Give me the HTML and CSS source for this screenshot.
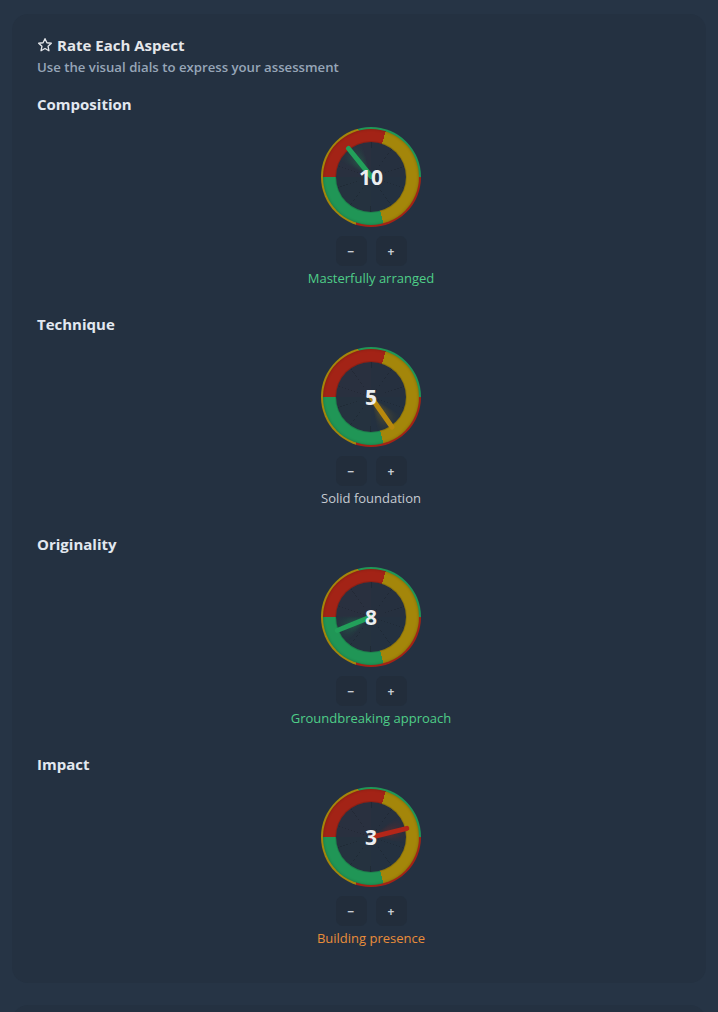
FILE: index.html
```html
<!DOCTYPE html>
<html lang="en">
<head>
<meta charset="utf-8">
<title>Rate Each Aspect</title>
<link rel="stylesheet" href="styles.css">
</head>
<body>
<div class="page">
  <section class="card">
    <header class="card-head">
      <h1 class="title">
        <svg class="star" viewBox="0 0 24 24" width="16" height="16" fill="none" stroke="currentColor" stroke-width="2" stroke-linejoin="round"><path d="M12 2.5l2.9 6.1 6.6.8-4.9 4.6 1.3 6.6L12 17.3l-5.9 3.3 1.3-6.6-4.9-4.6 6.6-.8z"/></svg>
        Rate Each Aspect
      </h1>
      <p class="subtitle">Use the visual dials to express your assessment</p>
    </header>

    <div class="aspect">
      <h2 class="aspect-name">Composition</h2>
      <div class="dial-wrap">
        <div class="dial">
          <div class="ring"></div>
          <div class="face"></div>
          <div class="glow" style="--a: 321deg; --c: rgba(34,160,90,0.35)"></div>
          <div class="needle green" style="transform: rotate(321deg)"></div>
          <div class="value">10</div>
        </div>
        <div class="controls">
          <button class="btn">−</button>
          <button class="btn">+</button>
        </div>
        <div class="verdict green-text">Masterfully arranged</div>
      </div>
    </div>

    <div class="aspect">
      <h2 class="aspect-name">Technique</h2>
      <div class="dial-wrap">
        <div class="dial">
          <div class="ring"></div>
          <div class="face"></div>
          <div class="glow" style="--a: 145deg; --c: rgba(184,140,10,0.35)"></div>
          <div class="needle yellow" style="transform: rotate(145deg)"></div>
          <div class="value">5</div>
        </div>
        <div class="controls">
          <button class="btn">−</button>
          <button class="btn">+</button>
        </div>
        <div class="verdict gray-text">Solid foundation</div>
      </div>
    </div>

    <div class="aspect">
      <h2 class="aspect-name">Originality</h2>
      <div class="dial-wrap">
        <div class="dial">
          <div class="ring"></div>
          <div class="face"></div>
          <div class="glow" style="--a: 248deg; --c: rgba(34,160,90,0.35)"></div>
          <div class="needle green" style="transform: rotate(248deg)"></div>
          <div class="value">8</div>
        </div>
        <div class="controls">
          <button class="btn">−</button>
          <button class="btn">+</button>
        </div>
        <div class="verdict green-text">Groundbreaking approach</div>
      </div>
    </div>

    <div class="aspect">
      <h2 class="aspect-name">Impact</h2>
      <div class="dial-wrap">
        <div class="dial">
          <div class="ring"></div>
          <div class="face"></div>
          <div class="glow" style="--a: 76deg; --c: rgba(170,36,24,0.35)"></div>
          <div class="needle red" style="transform: rotate(76deg)"></div>
          <div class="value">3</div>
        </div>
        <div class="controls">
          <button class="btn">−</button>
          <button class="btn">+</button>
        </div>
        <div class="verdict orange-text">Building presence</div>
      </div>
    </div>
  </section>
  <section class="card next"></section>
</div>
</body>
</html>
```
FILE: styles.css
```css
* { box-sizing: border-box; }
html, body {
  margin: 0;
  padding: 0;
  background: #263445;
  font-family: "Open Sans", "Noto Sans", sans-serif;
  color: #e5e7eb;
}
.page {
  padding: 14px 12px 0;
  display: flex;
  flex-direction: column;
  gap: 22px;
  height: 1012px;
  overflow: hidden;
}
.card {
  background: #243141;
  border-radius: 16px;
  padding: 21px 1px 36px 25px;
  display: flex;
  flex-direction: column;
}
.card.next {
  min-height: 60px;
  flex-shrink: 0;
}
.card-head {
  display: flex;
  flex-direction: column;
  gap: 3px;
  margin-bottom: 18px;
}
.title {
  margin: 0;
  font-size: 15px;
  line-height: 20px;
  font-weight: 700;
  color: #e5e7eb;
  display: flex;
  align-items: center;
  gap: 4px;
}
.star { color: #e5e7eb; }
.subtitle {
  margin: 0;
  font-size: 13.2px;
  line-height: 18px;
  font-weight: 600;
  color: #97a6b8;
}
.aspect {
  display: flex;
  flex-direction: column;
  gap: 13px;
  margin-bottom: 27px;
}
.aspect:last-child { margin-bottom: 0; }
.aspect-name {
  margin: 0;
  font-size: 15px;
  line-height: 20px;
  font-weight: 700;
  color: #e2e8f0;
}
.dial-wrap {
  display: flex;
  flex-direction: column;
  align-items: center;
}
.dial {
  position: relative;
  width: 100px;
  height: 100px;
  border-radius: 50%;
  background: conic-gradient(from 90deg, #a32316 0 108deg, #a4860a 108deg 255deg, #209656 255deg 360deg);
}
.ring {
  position: absolute;
  inset: 2px;
  border-radius: 50%;
  background: conic-gradient(from 270deg, #a32316 0 108deg, #a4860a 108deg 255deg, #209656 255deg 360deg);
  box-shadow: inset 0 0 3px rgba(0,0,0,0.25);
}
.face {
  position: absolute;
  inset: 15px;
  border-radius: 50%;
  background:
    repeating-conic-gradient(from 0deg, rgba(0,0,0,0.15) 0 1deg, transparent 1deg 36deg),
    conic-gradient(from 0deg, #26303f 0 90deg, #243140 90deg 180deg, #25323f 180deg 270deg, #29303f 270deg 360deg);
  box-shadow: 0 0 0 1px rgba(0,0,0,0.12);
}
.glow {
  position: absolute;
  inset: 15px;
  border-radius: 50%;
  background: conic-gradient(from calc(var(--a) - 25deg), transparent 0, var(--c) 25deg, transparent 50deg, transparent 360deg);
  -webkit-mask: radial-gradient(circle, #000 0, #000 40%, transparent 75%);
  mask: radial-gradient(circle, #000 0, #000 40%, transparent 75%);
}
.needle {
  position: absolute;
  left: 47.75px;
  top: 11px;
  width: 4.5px;
  height: 41px;
  border-radius: 2.25px;
  transform-origin: 50% 39px;
}
.needle.green { background: #22a05a; }
.needle.yellow { background: #b8880c; }
.needle.red { background: #b42618; }
.value {
  position: absolute;
  inset: 0;
  display: flex;
  align-items: center;
  justify-content: center;
  font-size: 21px;
  font-weight: 700;
  color: #eceef0;
}
.controls {
  display: flex;
  gap: 9px;
  margin-top: 9px;
}
.btn {
  width: 31px;
  height: 30px;
  border: none;
  border-radius: 7px;
  background: #222d3b;
  color: #c9ced6;
  font-family: "Open Sans", "Noto Sans", sans-serif;
  font-size: 12px;
  font-weight: 700;
  padding: 0;
  display: flex;
  align-items: center;
  justify-content: center;
}
.verdict {
  margin-top: 3px;
  font-size: 13px;
  line-height: 18px;
}
.green-text { color: #4fce88; }
.gray-text { color: #c6cbd2; }
.orange-text { color: #e98d3a; }
```
